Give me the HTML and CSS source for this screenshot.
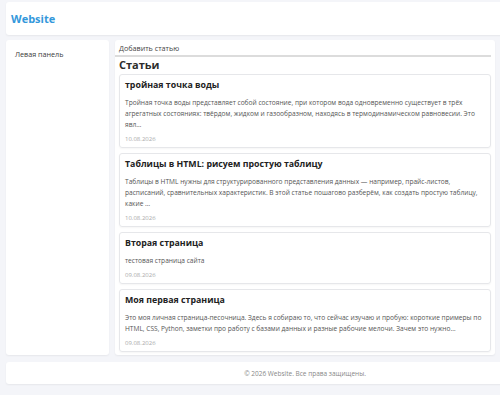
FILE: index.html
```html
<!DOCTYPE html>
<html lang="ru">
<head>
  <meta charset="UTF-8" />
  <title>Website</title>
  <link rel="stylesheet" href="styles.css">
</head>
<body>
  <div class="page">
    <header class="site-header">
      <a class="logo" href="#">Website</a>
      <nav class="top-nav">
        <a href="#">Профиль</a>
      </nav>
    </header>

    <div class="layout">
      <aside class="panel left-panel">Левая панель</aside>

      <main class="panel content">
        <div class="toolbar">
          <a href="#">Добавить статью</a>
        </div>
        <h2 class="section-title">Статьи</h2>

        <article class="post">
          <h3>тройная точка воды</h3>
          <p>Тройная точка воды представляет собой состояние, при котором вода одновременно существует в трёх агрегатных состояниях: твёрдом, жидком и газообразном, находясь в термодинамическом равновесии. Это явл…</p>
          <div class="date">10.08.2026</div>
        </article>

        <article class="post">
          <h3>Таблицы в HTML: рисуем простую таблицу</h3>
          <p>Таблицы в HTML нужны для структурированного представления данных — например, прайс-листов, расписаний, сравнительных характеристик. В этой статье пошагово разберём, как создать простую таблицу, какие …</p>
          <div class="date">10.08.2026</div>
        </article>

        <article class="post">
          <h3>Вторая страница</h3>
          <p>тестовая страница сайта</p>
          <div class="date">09.08.2026</div>
        </article>

        <article class="post">
          <h3>Моя первая страница</h3>
          <p>Это моя личная страница-песочница. Здесь я собираю то, что сейчас изучаю и пробую: короткие примеры по HTML, CSS, Python, заметки про работу с базами данных и разные рабочие мелочи. Зачем это нужно…</p>
          <div class="date">09.08.2026</div>
        </article>
      </main>

      <aside class="panel right-panel"></aside>
    </div>

    <footer class="site-footer">© 2026 Website. Все права защищены.</footer>
  </div>
</body>
</html>
```

FILE: styles.css
```css
body {
  margin: 0;
  font-family: "Open Sans", "Noto Sans", sans-serif;
  background-color: #f4f5f9;
  color: #333;
}
a {
  text-decoration: none;
}
.page {
  width: 598px;
  padding: 2px 6px 11px;
}
.panel,
.site-header,
.site-footer {
  background: #fff;
  border-radius: 3px;
  box-shadow: 0 1px 2px rgba(0,0,0,0.06);
}
.site-header {
  height: 33px;
  padding: 0 5px;
  display: flex;
  justify-content: space-between;
  align-items: center;
}
.logo {
  color: #3498db;
  font-weight: bold;
  font-size: 11px;
}
.top-nav a {
  color: #555;
  font-size: 8px;
  margin-right: 40px;
}
.layout {
  display: grid;
  grid-template-columns: 103px 380px 103px;
  gap: 6px;
  margin: 5px 0 7px;
  height: 315px;
}
.left-panel {
  padding: 9px;
  font-size: 7.2px;
  color: #3a3a3a;
}
.content {
  padding: 3px 4px 3px;
  display: flex;
  flex-direction: column;
}
.toolbar {
  font-size: 7.2px;
  line-height: 11px;
  padding-bottom: 1px;
  margin-left: -4px;
  padding-left: 4px;
  border-bottom: 2px solid #dcdcdc;
}
.toolbar a {
  color: #444;
}
.section-title {
  margin: 1px 0 2px;
  font-size: 11px;
  line-height: 14px;
  color: #2c2c2c;
}
.post {
  border: 1px solid #e6e7ea;
  border-radius: 3px;
  padding: 4px 5px 3px;
  margin-bottom: 5px;
  box-shadow: 0 1px 2px rgba(0,0,0,0.04);
}
.post:last-child {
  margin-bottom: 0;
}
.post h3 {
  margin: 0 0 5px;
  font-size: 8.8px;
  line-height: 13px;
  color: #222;
}
.post p {
  margin: 0 0 5px;
  font-size: 6.6px;
  line-height: 11px;
  color: #555;
}
.post .date {
  font-size: 6px;
  line-height: 9px;
  color: #aaa;
}
.site-footer {
  height: 22px;
  display: flex;
  justify-content: center;
  align-items: center;
  font-size: 6.5px;
  color: #888;
}
```
